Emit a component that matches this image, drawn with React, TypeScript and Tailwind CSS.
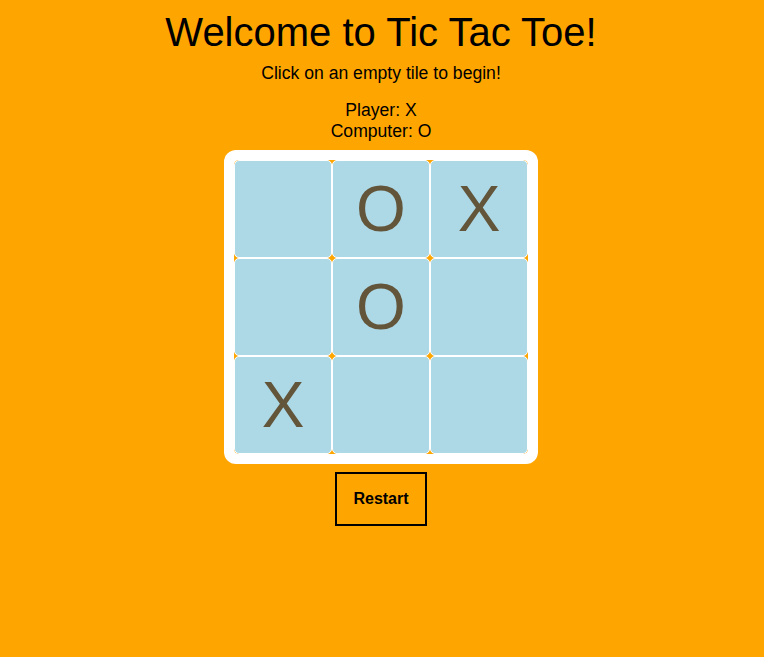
import React from 'react';

const board = ['', 'O', 'X', '', 'O', '', 'X', '', ''];

export default function App() {
  return (
    <div className="min-h-screen bg-[#ffa500] text-black font-['Liberation_Sans',Arial,sans-serif] flex flex-col items-center pr-[2px]">
      <h1 className="pt-[9px] text-[40px] leading-[46px]">Welcome to Tic Tac Toe!</h1>
      <p className="mt-[8px] text-[17.6px] leading-[21px]">Click on an empty tile to begin!</p>
      <div className="mt-[16px] text-[17.6px] leading-[21px] text-center">
        <div>Player: X</div>
        <div>Computer: O</div>
      </div>
      <div className="mt-[8px] bg-white rounded-[12px] p-[10px]">
        <div className="grid grid-cols-3 bg-[#ffa500] rounded-[5px] overflow-hidden">
          {board.map((v, i) => (
            <div
              key={i}
              className="w-[98px] h-[98px] border border-white rounded-[5px] bg-[#add8e6] flex items-center justify-center text-[64px] leading-none text-[#62553a] cursor-pointer"
            >
              {v}
            </div>
          ))}
        </div>
      </div>
      <button className="mt-2 w-[92px] h-[54px] border-2 border-black font-bold text-[16px] cursor-pointer">
        Restart
      </button>
    </div>
  );
}
